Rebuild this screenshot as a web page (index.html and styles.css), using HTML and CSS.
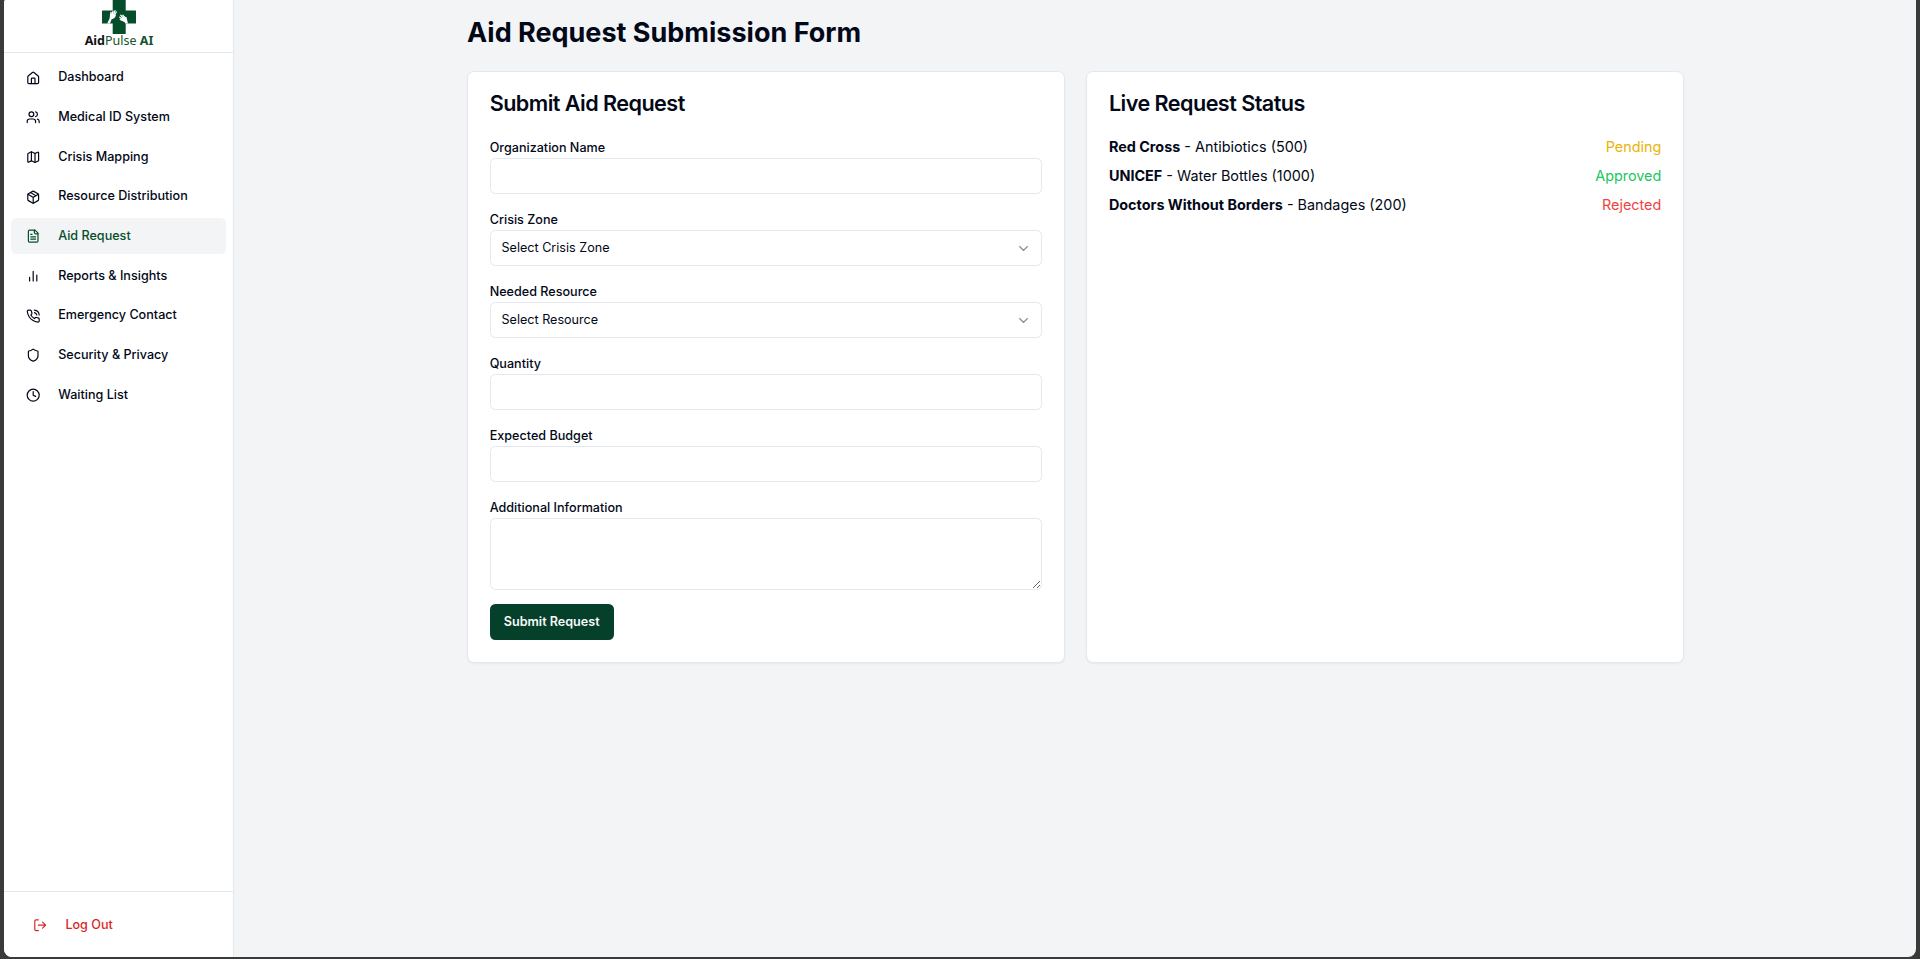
FILE: index.html
```html
<!DOCTYPE html>
<html lang="en">
<head>
<meta charset="utf-8">
<title>AidPulse AI</title>
<link rel="stylesheet" href="styles.css">
</head>
<body>
<div class="window">
  <aside class="sidebar">
    <div class="brand">
      <svg class="brand-mark" viewBox="0 0 34 34">
        <path class="cross" d="M10.700 0h13v10.500H33.500q.5 0 .5.5v12q0 .5-.5.5h-9.800v10q0 .5-.5.5h-12q-.5 0-.5-.5v-10H.5q-.5 0-.5-.5V11q0-.5.5-.5h10.200z"/>
        <path class="palm" d="M5.200 23.500 7.600 18.500 8 14.500 11.500 13.500 14 15.500 12.500 18 9.500 19.500 8 23.500zM26 23.500 25 19.500 24.500 17 21.500 16.500 19 18.500 20 21 22.500 22 23.300 23.500z"/>
        <path class="fingers" d="M8.600 15 9 12.300M10 14.500l1-3.300M11.500 14.500l1.500-3.800M12.700 15l1.600-3M22.500 17.500l-1.700-2.300M21 18l-2.300-2.800M20 19l-2.200-1.800M20.300 20.300l-2.100-.8"/>
      </svg>
      <div class="brand-name"><b>Aid</b><span>Pulse</span> <strong>AI</strong></div>
    </div>
    <nav class="nav">
      <a class="nav-item"><svg class="icon" viewBox="0 0 24 24"><path d="M15 21v-8a1 1 0 0 0-1-1h-4a1 1 0 0 0-1 1v8"/><path d="M3 10a2 2 0 0 1 .709-1.528l7-5.999a2 2 0 0 1 2.582 0l7 5.999A2 2 0 0 1 21 10v9a2 2 0 0 1-2 2H5a2 2 0 0 1-2-2z"/></svg>Dashboard</a>
      <a class="nav-item"><svg class="icon" viewBox="0 0 24 24"><path d="M16 21v-2a4 4 0 0 0-4-4H6a4 4 0 0 0-4 4v2"/><circle cx="9" cy="7" r="4"/><path d="M22 21v-2a4 4 0 0 0-3-3.870M16 3.130a4 4 0 0 1 0 7.750"/></svg>Medical ID System</a>
      <a class="nav-item"><svg class="icon" viewBox="0 0 24 24"><path d="M14.106 5.553a2 2 0 0 0 1.788 0l3.659-1.830A1 1 0 0 1 21 4.619v12.764a1 1 0 0 1-.553.894l-4.553 2.277a2 2 0 0 1-1.788 0l-4.212-2.106a2 2 0 0 0-1.788 0l-3.659 1.830A1 1 0 0 1 3 19.381V6.618a1 1 0 0 1 .553-.894l4.553-2.277a2 2 0 0 1 1.788 0z"/><path d="M15 5.764v15M9 3.236v15"/></svg>Crisis Mapping</a>
      <a class="nav-item"><svg class="icon" viewBox="0 0 24 24"><path d="M11 21.730a2 2 0 0 0 2 0l7-4A2 2 0 0 0 21 16V8a2 2 0 0 0-1-1.730l-7-4a2 2 0 0 0-2 0l-7 4A2 2 0 0 0 3 8v8a2 2 0 0 0 1 1.730z"/><path d="M12 22V12M3.300 7l7.703 4.734a2 2 0 0 0 1.994 0L20.700 7M7.500 4.270l9 5.150"/></svg>Resource Distribution</a>
      <a class="nav-item active"><svg class="icon" viewBox="0 0 24 24"><path d="M15 2H6a2 2 0 0 0-2 2v16a2 2 0 0 0 2 2h12a2 2 0 0 0 2-2V7z"/><path d="M14 2v4a2 2 0 0 0 2 2h4M10 9H8M16 13H8M16 17H8"/></svg>Aid Request</a>
      <a class="nav-item"><svg class="icon" viewBox="0 0 24 24"><path d="M18 20V10M12 20V4M6 20v-6"/></svg>Reports &amp; Insights</a>
      <a class="nav-item"><svg class="icon" viewBox="0 0 24 24"><path d="M22 16.920v3a2 2 0 0 1-2.180 2 19.790 19.790 0 0 1-8.630-3.070 19.500 19.500 0 0 1-6-6 19.790 19.790 0 0 1-3.070-8.670A2 2 0 0 1 4.110 2h3a2 2 0 0 1 2 1.720 12.840 12.840 0 0 0 .7 2.810 2 2 0 0 1-.45 2.110L8.090 9.910a16 16 0 0 0 6 6l1.270-1.270a2 2 0 0 1 2.110-.45 12.840 12.840 0 0 0 2.810.7A2 2 0 0 1 22 16.920z"/><path d="M14.050 2a9 9 0 0 1 8 7.940M14.050 6A5 5 0 0 1 18 10"/></svg>Emergency Contact</a>
      <a class="nav-item"><svg class="icon" viewBox="0 0 24 24"><path d="M20 13c0 5-3.500 7.500-7.660 8.950a1 1 0 0 1-.67-.01C7.500 20.500 4 18 4 13V6a1 1 0 0 1 1-1c2 0 4.500-1.200 6.240-2.720a1.170 1.170 0 0 1 1.520 0C14.510 3.810 17 5 19 5a1 1 0 0 1 1 1z"/></svg>Security &amp; Privacy</a>
      <a class="nav-item"><svg class="icon" viewBox="0 0 24 24"><circle cx="12" cy="12" r="10"/><path d="M12 6v6l4 2"/></svg>Waiting List</a>
    </nav>
    <div class="sidebar-foot">
      <a class="logout"><svg class="icon" viewBox="0 0 24 24"><path d="M9 21H5a2 2 0 0 1-2-2V5a2 2 0 0 1 2-2h4M16 17l5-5-5-5M21 12H9"/></svg>Log Out</a>
    </div>
  </aside>
  <main class="main">
    <div class="container">
      <h1 class="page-title">Aid Request Submission Form</h1>
      <div class="grid">
        <section class="card">
          <h2 class="card-title">Submit Aid Request</h2>
          <form class="form">
            <label class="field"><span class="label">Organization Name</span><input class="control" type="text"></label>
            <div class="field"><span class="label">Crisis Zone</span><button class="control select" type="button">Select Crisis Zone<svg class="chevron" viewBox="0 0 24 24"><path d="m6 9 6 6 6-6"/></svg></button></div>
            <div class="field"><span class="label">Needed Resource</span><button class="control select" type="button">Select Resource<svg class="chevron" viewBox="0 0 24 24"><path d="m6 9 6 6 6-6"/></svg></button></div>
            <label class="field"><span class="label">Quantity</span><input class="control" type="text"></label>
            <label class="field"><span class="label">Expected Budget</span><input class="control" type="text"></label>
            <label class="field last"><span class="label">Additional Information</span><textarea class="control area"></textarea></label>
            <button class="submit" type="button">Submit Request</button>
          </form>
        </section>
        <section class="card">
          <h2 class="card-title">Live Request Status</h2>
          <ul class="status-list">
            <li class="status-row"><span><strong>Red Cross</strong> - Antibiotics (500)</span><span class="pending">Pending</span></li>
            <li class="status-row"><span><strong>UNICEF</strong> - Water Bottles (1000)</span><span class="approved">Approved</span></li>
            <li class="status-row"><span><strong>Doctors Without Borders</strong> - Bandages (200)</span><span class="rejected">Rejected</span></li>
          </ul>
        </section>
      </div>
    </div>
  </main>
</div>
</body>
</html>
```
FILE: styles.css
```css
* { box-sizing: border-box; margin: 0; padding: 0; }
html { font-size: 14.4px; }
body {
  height: 959px;
  padding: 0 4px 2px;
  overflow: hidden;
  background: #3a3a39;
  color: #020817;
  font-family: Inter, "Liberation Sans", sans-serif;
  line-height: 1.5;
}
.window {
  display: flex;
  height: 957px;
  overflow: hidden;
  border-radius: 2px 0 8px 8px;
  background: #f3f4f6;
}
.sidebar {
  display: flex;
  flex-direction: column;
  flex: none;
  width: 230px;
  background: #fff;
  border-right: 1px solid #e2e8f0;
}
.brand {
  display: flex;
  flex-direction: column;
  align-items: center;
  height: 53px;
  border-bottom: 1px solid #e2e8f0;
}
.brand-mark { width: 34px; height: 34px; }
.cross { fill: #064d2b; }
.palm { fill: #fff; }
.fingers { fill: none; stroke: #fff; stroke-width: 1.3; stroke-linecap: round; }
.brand-name {
  padding-left: 1px;
  font-family: "Noto Sans", sans-serif;
  font-size: 12.5px;
  line-height: 14px;
  color: #14532d;
  white-space: nowrap;
}
.brand-name b { color: #111; font-weight: 700; }
.nav {
  display: flex;
  flex: 1;
  flex-direction: column;
  gap: 3.65px;
  padding: 6.9px 7.2px;
}
.nav-item {
  display: flex;
  align-items: center;
  gap: 18px;
  height: 36px;
  padding: 0 14.6px;
  border-radius: 5.4px;
  font-size: 12.6px;
  font-weight: 500;
}
.nav-item.active { background: #f3f4f6; color: #064e2b; }
.icon {
  flex: none;
  width: 14.4px;
  height: 14.4px;
  fill: none;
  stroke: currentColor;
  stroke-width: 2;
  stroke-linecap: round;
  stroke-linejoin: round;
}
.sidebar-foot {
  height: 66px;
  padding: 15px 14.4px 0;
  border-top: 1px solid #e2e8f0;
}
.logout {
  display: flex;
  align-items: center;
  gap: 18px;
  height: 36px;
  padding: 0 14.6px;
  color: #dc2626;
  font-size: 12.6px;
  font-weight: 500;
}
.main { flex: 1; padding: 17px 0 0 1px; }
.container { width: 1216.8px; margin: 0 auto; }
.page-title {
  margin-bottom: 22px;
  font-size: 27px;
  font-weight: 700;
  line-height: 32.4px;
}
.grid { display: grid; grid-template-columns: 1fr 1fr; gap: 21.6px; }
.card {
  height: 592px;
  padding: 21px 21.6px;
  background: #fff;
  border: 1px solid #e2e8f0;
  border-radius: 7.2px;
  box-shadow: 0 1px 2px rgba(0, 0, 0, .05);
}
.card-title {
  margin-bottom: 22.2px;
  font-size: 21.6px;
  font-weight: 600;
  line-height: 21.6px;
  letter-spacing: -.025em;
}
.form { display: flex; flex-direction: column; align-items: flex-start; }
.field { display: block; width: 100%; height: 72px; }
.label {
  display: block;
  height: 21px;
  font-size: 12.6px;
  font-weight: 500;
  line-height: 21px;
}
.control {
  display: block;
  width: 100%;
  height: 36px;
  padding: 0 10.8px;
  border: 1px solid #e2e8f0;
  border-radius: 5.4px;
  background: #fff;
  color: inherit;
  font: 400 12.6px/18px Inter, "Liberation Sans", sans-serif;
}
.select { display: flex; align-items: center; justify-content: space-between; padding-right: 9.9px; }
.chevron {
  width: 15px;
  height: 15px;
  fill: none;
  stroke: #020817;
  stroke-width: 2;
  stroke-linecap: round;
  stroke-linejoin: round;
  opacity: .5;
}
.field.last { height: 106.4px; }
.area { height: 72px; padding: 7.2px 10.8px; resize: vertical; }
.submit {
  width: 124px;
  height: 36px;
  border: 0;
  border-radius: 5.4px;
  background: #05402a;
  color: #f8fafc;
  font: 600 12.6px/18px Inter, "Liberation Sans", sans-serif;
}
.status-list { display: flex; flex-direction: column; gap: 7.4px; margin-top: -1px; list-style: none; }
.status-row { display: flex; justify-content: space-between; line-height: 21.6px; }
.status-row strong { font-weight: 700; }
.pending { color: #eab308; }
.approved { color: #22c55e; }
.rejected { color: #ef4444; }
```
